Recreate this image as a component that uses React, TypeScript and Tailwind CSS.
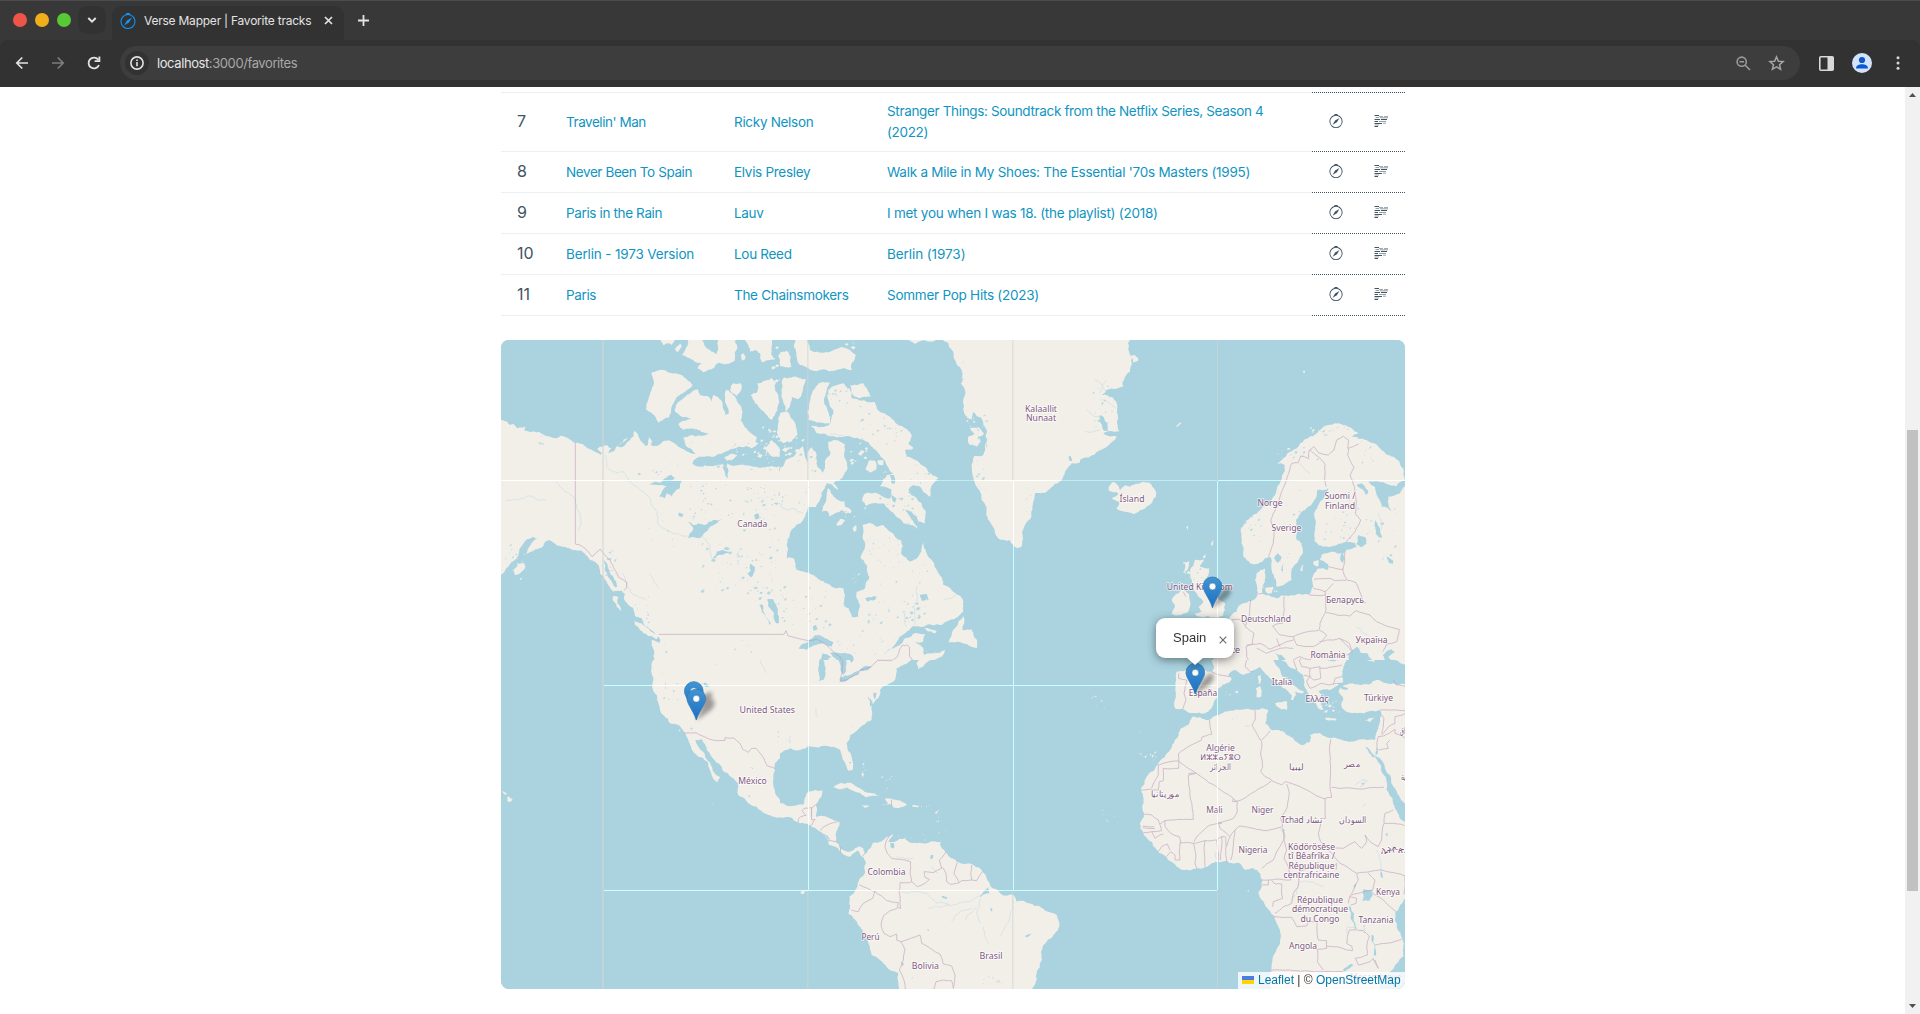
import React from "react";

/* ---------- helpers ---------- */

function makeRandom(seed: number) {
  let s = seed;
  return () => {
    s = (s * 1664525 + 1013904223) % 4294967296;
    return s / 4294967296;
  };
}

/* Breaks straight segments up so that a coarse outline reads as a coastline. */
function rough(points: string, amount = 0.13, close = true, min = 7) {
  const rnd = makeRandom(points.length * 97 + 13);
  const pts = points.trim().split(/\s+/).map((p) => p.split(",").map(Number));
  const out: number[][] = [];
  const split = (a: number[], b: number[], depth: number) => {
    const dx = b[0] - a[0];
    const dy = b[1] - a[1];
    const len = Math.hypot(dx, dy);
    if (len < min || depth > 5 || len > 260) {
      out.push(b);
      return;
    }
    const k = (rnd() - 0.5) * 2 * amount;
    const m = [(a[0] + b[0]) / 2 - dy * k, (a[1] + b[1]) / 2 + dx * k];
    split(a, m, depth + 1);
    split(m, b, depth + 1);
  };
  out.push(pts[0]);
  for (let i = 1; i < pts.length; i++) split(pts[i - 1], pts[i], 0);
  if (close) split(pts[pts.length - 1], pts[0], 0);
  return "M" + out.map((p) => p[0].toFixed(1) + "," + p[1].toFixed(1)).join("L") + (close ? "Z" : "");
}

/* Many small ponds or islets inside a box. */
function specks(x: number, y: number, w: number, h: number, n: number, size: number) {
  const rnd = makeRandom(x * 31 + y * 17 + n);
  let d = "";
  for (let i = 0; i < n; i++) {
    const cx = x + rnd() * w;
    const cy = y + rnd() * h;
    const r = 1 + rnd() * rnd() * size;
    const t = rnd() * 3;
    d += `M${(cx - r).toFixed(1)},${(cy + t).toFixed(1)}L${cx.toFixed(1)},${(cy - r * 0.7).toFixed(1)}L${(cx + r * 1.2).toFixed(1)},${(cy - t).toFixed(1)}L${(cx + r * 0.3).toFixed(1)},${(cy + r * 0.9).toFixed(1)}Z`;
  }
  return d;
}

type Tile = {
  x: number;
  y: number;
  w: number;
  h: number;
  land: string[];
  water: string[];
  rivers?: string[];
  ponds?: number[][];
  islets?: number[][];
  borders: string[];
};

const tiles: Tile[] = [
  {
    x: 0, y: 0, w: 280, h: 320,
    land: [
      "-10,245 8,240 22,246 30,255 42,252 50,264 65,262 75,272 100,274 118,276 138,288 165,294 195,290 212,300 222,308 248,312 262,325 285,335 302,344 306,338 292,328 300,320 320,315 335,325 325,340 345,330 360,312 384,292 372,306 352,322 372,318 388,302 400,290 404,272 414,285 425,305 435,318 443,316 446,290 455,300 452,315 470,318 490,303 510,302 530,315 550,328 565,335 590,342 598,352 580,362 578,372 600,380 630,378 655,374 668,372 680,385 682,370 700,378 735,376 765,380 790,382 815,378 835,380 860,370 860,990 459,990 462,930 455,900 478,910 482,900 470,885 450,868 432,855 425,835 405,828 400,805 385,795 372,778 375,762 365,752 340,755 325,735 314,718 300,700 288,668 262,648 245,632 210,626 180,618 160,608 148,600 135,605 130,618 105,628 80,642 85,625 92,612 112,596 100,590 78,600 62,622 55,645 35,665 25,680 3,705 -10,705",
      "338,768 355,772 352,790 364,815 350,800 342,785",
      "402,842 425,850 450,872 474,888 470,898 445,888 420,870 404,855",
      "40,690 55,672 70,668 76,680 62,698 45,705",
      "455,98 492,90 515,100 545,105 560,118 578,135 555,155 530,172 515,200 508,232 488,240 474,248 455,220 437,208 445,180 455,150 462,125",
      "595,148 600,165 622,168 635,185 640,165 655,172 668,190 675,225 685,222 675,180 678,150 695,160 712,185 725,205 722,240 740,265 770,290 765,305 775,310 755,325 740,318 715,320 690,328 665,342 640,350 600,350 580,335 560,320 550,292 575,285 628,280 590,268 550,270 535,252 580,235 540,228 525,215 535,185 560,165",
      "690,150 700,130 722,130 725,145 710,168 697,160",
      "752,165 770,158 772,130 795,122 815,115 828,125 825,150 835,165 832,210 815,240 795,220 780,205 765,190",
      "545,45 560,20 565,-8 605,-8 630,30 650,42 655,-8 705,-8 712,20 705,60 690,70 655,68 640,85 610,97 592,85 605,70 580,60",
      "475,-8 530,-8 515,15 500,10 490,15",
      "525,30 540,10 545,20 533,38",
      "722,45 732,40 735,58 725,62",
      "728,-8 820,-8 815,20 820,60 785,65 780,40 765,30 750,35 745,15",
      "835,45 855,32 872,40 875,75 860,82 838,70",
      "835,250 840,225 860,215 860,310 850,310 835,290",
      "795,325 815,300 842,330 838,350 810,345",
      "672,352 690,342 712,345 700,358 680,362",
    ],
    water: [
      "447,432 480,428 495,415 515,405 525,415 510,425 545,420 540,445 525,455 515,470 500,460 495,475 478,470 485,455 500,440 470,435",
      "562,545 580,555 595,550 615,555 640,540 665,538 650,550 630,560 612,580 600,595 565,595 575,575 580,565",
      "636,657 650,638 665,630 690,636 665,645",
      "802,778 820,778 830,800 838,848 828,850 822,820 805,800",
      "778,795 790,795 796,830 812,850 808,855 790,820",
      "750,670 765,680 755,712 742,700 752,690",
      "762,525 775,520 778,535 765,538",
      "535,518 550,522 548,530 536,528",
      "328,312 338,318 372,300 340,330",
      "668,378 684,384 682,416 674,395",
      "838,372 850,372 845,398 838,392",
      "310,660 322,672 330,700 352,740 346,742 325,712 314,690",
    ],
    rivers: [
      "316,345 320,380 340,395 370,395 385,420 400,435 430,455 452,480 470,515 472,548 500,570 540,585 562,588",
      "606,590 625,610 635,655",
      "170,425 190,450 225,475 240,520 235,570",
      "18,482 50,478 90,468 110,478 140,480",
      "448,700 465,730 475,742",
      "368,700 380,735 400,765 440,780",
    ],
    ponds: [
      [560, 430, 270, 110, 55, 5], [600, 610, 235, 150, 60, 7], [430, 470, 180, 150, 10, 5],
      [740, 440, 100, 60, 24, 6], [680, 540, 160, 100, 18, 6], [760, 740, 80, 60, 14, 6],
      [415, 345, 120, 60, 9, 6], [480, 880, 340, 80, 9, 4], [300, 620, 50, 120, 20, 6],
      [15, 600, 90, 60, 12, 5], [110, 285, 40, 40, 7, 4], [390, 760, 60, 100, 12, 4],
      [560, 290, 190, 30, 8, 4], [600, 375, 230, 20, 12, 5],
    ],
    islets: [[35, 258, 40, 12, 5, 6], [770, 260, 70, 90, 24, 8], [815, 20, 30, 110, 9, 7], [320, 690, 35, 60, 10, 8], [20, 640, 60, 80, 14, 6], [690, 325, 130, 50, 18, 8]],
    borders: [
      "226,308 226,612 240,615 255,625 276,650 288,638 301,627 312,642 330,660 345,690 356,712 380,727 380,742 372,752",
      "476,883 853,883 858,872 864,888 900,893",
    ],
  },
  {
    x: 280, y: 0, w: 300, h: 320,
    land: [
      "-10,40 8,35 20,32 32,50 35,80 15,82 -10,75",
      "45,-10 78,-10 90,30 120,38 150,35 190,22 210,30 228,45 215,70 215,90 190,85 160,92 130,88 100,92 85,85 60,75 50,50",
      "375,-10 482,-10 450,5 420,4 405,12",
      "5,130 12,112 40,110 78,118 70,145 55,178 35,172 30,200 15,215 10,185 5,160",
      "-10,225 25,215 40,240 52,285 35,305 10,310 -10,300",
      "-10,385 10,378 18,360 40,350 52,330 68,318 80,360 84,375 82,340 95,322 110,345 112,380 128,398 135,385 135,362 150,345 145,305 165,300 195,312 192,345 203,385 185,415 160,430 175,450 155,433 140,430 125,455 120,480 108,502 85,500 75,530 40,565 22,600 20,655 42,655 50,690 75,697 100,705 120,720 155,740 190,745 190,790 215,830 235,830 240,800 230,755 255,745 268,710 262,680 242,655 255,610 250,570 248,555 270,548 290,560 310,555 330,575 345,590 363,600 363,640 390,665 415,650 430,605 440,640 455,660 475,700 490,735 520,755 550,785 550,815 510,840 485,855 440,855 400,858 375,880 350,905 335,925 350,920 375,895 405,880 435,882 430,905 405,908 430,925 432,945 460,940 495,930 485,950 440,965 415,985 -10,990",
      "145,445 158,465 175,480 195,485 195,500 215,512 210,520 185,510 165,520 148,530 140,512 125,515 135,490 140,465",
      "170,550 180,537 195,540 185,555 172,558",
      "218,565 228,555 230,570 222,575",
      "85,240 88,190 100,150 120,128 155,125 140,150 132,190 150,230 152,250 120,248",
      "145,150 190,130 208,145 215,175 245,182 285,185 290,205 320,225 340,240 375,265 395,290 385,310 400,325 375,330 380,350 420,370 445,395 475,415 460,430 450,470 430,455 420,440 400,435 385,450 410,475 435,510 435,550 415,545 395,515 375,510 400,545 412,568 370,550 345,525 325,505 310,490 280,490 258,497 248,485 252,462 285,458 310,470 332,475 335,450 300,440 320,405 340,400 320,375 295,340 275,320 250,300 235,295 210,290 175,292 140,285 110,280 92,258 150,252 160,210 145,180",
      "210,135 250,130 272,170 240,175 215,160",
      "262,375 270,360 285,362 288,390 270,398 258,390",
      "292,362 310,360 310,374 296,374",
      "80,425 100,428 112,436 140,432 122,460 100,456",
      "550,828 553,850 548,870 575,868 582,890 592,905 590,925 575,920 560,912 535,905 505,908 515,885 535,845",
      "433,863 470,875 465,880 440,872",
      "480,-10 505,10 520,35 525,60 545,90 543,130 555,150 550,190 555,225 575,240 580,215 605,235 620,270 622,300 615,330 610,345 583,348 577,400 590,440 605,480 625,540 645,580 665,600 690,600 712,625 725,620 728,590 738,550 757,500 765,460 800,455 845,420 855,395 875,370 910,365 910,-10",
      "563,290 585,280 602,303 590,320 570,315",
      "570,265 595,262 612,280 600,290",
    ],
    water: [
      "330,405 342,405 345,430 335,430",
      "332,465 350,475 345,488 338,482",
      "55,925 85,905 105,885 135,895 160,908 155,920 135,912 115,912 95,920 80,930",
      "118,990 116,965 128,940 155,950 140,962 132,990",
      "150,938 185,940 215,945 222,960 205,975 185,965 170,960",
      "98,860 108,855 112,868 100,872",
      "255,775 290,770 285,780 260,784",
      "420,765 440,762 445,775 425,782",
      "845,470 790,465 770,480 800,458",
      "865,350 872,348 876,362 868,362",
      "190,795 205,792 215,800 200,803",
      "360,600 364,590 370,610",
    ],
    rivers: ["375,820 378,860", "-5,498 40,505 70,520", "492,780 510,775 528,765", "335,925 315,942", "148,300 152,282 190,288 222,296", "410,740 402,800 405,855"],
    ponds: [
      [0, 740, 150, 130, 35, 5], [255, 760, 200, 90, 40, 8], [255, 590, 100, 60, 20, 4], [0, 430, 90, 90, 14, 4],
      [290, 660, 170, 90, 15, 4], [145, 140, 60, 60, 15, 6], [240, 190, 140, 130, 28, 5], [300, 455, 100, 60, 14, 6],
      [520, 60, 30, 150, 16, 5], [590, 360, 30, 160, 20, 5], [580, 220, 40, 120, 16, 5], [730, 440, 70, 120, 12, 5],
      [170, 870, 200, 80, 18, 4], [350, 520, 60, 40, 10, 5], [50, 320, 60, 90, 12, 5], [390, 370, 60, 60, 12, 4],
    ],
    islets: [[10, 290, 60, 60, 22, 9], [210, 300, 60, 70, 16, 9], [190, 500, 80, 30, 7, 7], [215, 700, 25, 30, 7, 6], [0, 0, 30, 60, 6, 6], [195, 4, 40, 20, 5, 7], [430, 930, 40, 20, 5, 5], [560, 215, 50, 70, 14, 8], [300, 385, 50, 40, 9, 7]],
    borders: [
      "-5,883 12,883 18,872 25,888 45,893 65,898 95,902 110,897 140,915 160,935 180,950 188,968 188,1000",
      "265,990 292,961 338,961 352,950 358,930 368,915 375,918 380,914 388,920 388,948 398,960",
    ],
  },
  {
    x: 580, y: 0, w: 330, h: 320,
    land: [
      "-10,-10 148,-10 145,30 155,75 150,95 135,110 130,140 112,145 80,150 65,165 100,175 112,200 115,270 118,275 70,280 110,290 80,320 40,345 -10,368",
      "152,48 165,45 175,62 160,68",
      "288,260 300,247 303,250 291,261",
      "669,92 675,92 675,98 670,98",
      "100,425 112,435 120,450 135,435 150,440 175,432 190,425 210,430 225,450 228,470 215,490 190,508 160,522 135,515 110,506 118,485 95,475 115,460 85,450 90,435",
      "590,370 610,355 640,330 660,310 690,290 720,270 745,255 765,250 790,255 815,265 835,280 815,290 860,300 900,325 940,350 970,385 975,420 950,438 920,432 880,425 865,425 885,440 890,465 905,500 935,512 925,470 960,460 972,440 1000,440 1000,1000 395,1000 400,960 395,880 370,862 400,858 430,850 450,830 470,815 480,795 500,788 530,770 525,720 530,700 555,685 556,710 548,740 548,762 565,765 590,775 605,765 625,768 660,762 690,762 700,740 702,700 715,685 745,690 745,672 720,660 725,645 760,635 790,640 800,630 832,622 825,608 800,605 770,615 730,620 705,605 705,560 702,520 718,490 735,465 745,445 712,450 700,485 665,515 648,540 650,600 665,610 668,640 640,680 635,720 610,735 590,740 588,720 575,690 570,650 555,655 530,672 510,670 490,650 485,610 482,570 495,545 520,525 550,500 580,470 600,430 610,400 615,375",
      "555,745 580,740 575,760 560,758",
      "660,690 672,672 667,695",
      "700,665 715,660 716,678 702,676",
      "345,660 372,658 360,680 388,685 385,705 370,725 395,740 410,770 435,790 435,810 428,828 400,832 370,832 350,828 345,820 365,815 355,800 370,785 355,770 340,745 335,720 330,690",
      "285,765 305,750 325,760 332,790 325,815 295,825 275,822 285,800 275,780",
      "318,560 324,558 322,570",
      "392,612 402,600 398,618",
      "315,668 328,664 322,690 314,695",
    ],
    water: [
      "835,585 855,590 860,610 845,622 828,612",
      "885,540 900,570 905,595 890,585",
      "582,655 592,640 605,650 595,668",
      "603,690 612,670 608,700",
      "782,640 790,640 790,670 784,665",
      "800,1000 805,945 830,920 842,938 862,940 880,965 915,962 908,945 935,928 945,935 925,950 950,978 980,985 1000,1000",
      "585,940 605,945 622,965 645,1000 600,1000",
      "60,225 70,230 85,275 70,270",
      "370,310 352,320 372,325",
      "920,650 940,662 938,672 925,665",
      "830,435 845,430 865,455 858,465",
    ],
    rivers: [
      "45,120 75,150 110,170", "20,210 60,230 72,265", "15,275 60,270", "60,180 90,190 108,205", "830,860 845,875 865,885", "895,520 905,560 895,590", "660,370 690,400", "80,120 60,160",
    ],
    ponds: [
      [780, 440, 60, 130, 22, 5], [730, 520, 80, 80, 16, 4], [600, 400, 60, 140, 10, 4], [840, 300, 100, 90, 16, 4], [600, 620, 50, 100, 9, 4],
      [850, 480, 100, 180, 16, 6], [40, 120, 70, 160, 20, 5], [600, 310, 120, 50, 18, 5], [485, 520, 60, 90, 14, 4], [720, 255, 90, 30, 14, 5], [335, 665, 40, 60, 8, 4],
    ],
    islets: [[590, 320, 80, 50, 16, 7], [690, 260, 40, 20, 6, 8], [310, 665, 20, 50, 8, 7], [366, 640, 12, 12, 3, 6], [548, 740, 50, 20, 5, 6], [700, 600, 40, 15, 6, 5]],
    borders: [
      "565,650 580,610 582,570 572,540 590,500 605,455 622,410 635,370 655,368 662,348 685,355 688,330 702,320 715,338 745,345 762,330 770,300 790,288 806,300 803,325 836,312",
      "806,325 803,345 812,365 822,382 810,408 823,440 826,520 842,540 825,575 798,605",
      "690,330 715,350 735,372 734,420 738,440",
      "795,635 788,690 800,720 828,728 848,782 858,790",
      "745,680 790,688", "702,718 750,715 765,722 798,722", "700,745 735,755 760,730", "735,755 738,810 720,850 718,868",
      "688,765 735,765", "738,818 810,828 828,812 870,825 890,845 958,868 950,905 920,912 908,935", "612,770 608,850 590,852 578,858 600,885 640,890 670,878 718,870 740,885 718,910 700,920 650,915 640,890",
      "512,780 508,830 495,860 522,880 518,912 498,920 500,950 520,1000", "455,840 480,838 495,855", "500,915 540,910 570,928 620,905 640,900", "530,925 560,940 600,925 640,925",
      "718,905 760,900 778,895 800,915 815,935 800,945", "640,960 660,950 690,960 700,945 760,955 795,945", "628,960 640,990", "660,955 680,985", "310,755 318,770",
      "590,895 600,920", "535,762 548,760", "778,895 808,910 818,935",
    ],
  },
  {
    x: 0, y: 320, w: 280, h: 329,
    land: [
      "460,-10 455,40 458,85 475,130 490,165 510,190 535,195 552,215 565,240 580,275 595,290 610,295 625,310 635,345 652,368 660,352 640,335 632,315 615,285 595,260 585,240 605,238 620,270 635,290 655,310 672,335 700,355 715,380 715,405 745,430 770,440 800,462 840,473 860,470 860,430 845,425 825,395 820,350 825,310 845,285 860,270 860,-10",
      "22,410 38,418 28,427 22,422",
      "6,394 20,400 18,405 10,400",
    ],
    water: ["610,70 618,68 625,82 616,80", "518,92 524,90 523,98", "750,323 760,324 758,327", "742,407 752,408 748,411"],
    rivers: ["780,-5 790,20 800,38"],
    ponds: [[480, 30, 60, 90, 8, 4], [600, 60, 30, 30, 6, 4], [640, 10, 8, 8, 1, 4], [830, 190, 10, 60, 4, 3], [570, 200, 10, 10, 2, 4]],
    islets: [[518, 200, 25, 15, 3, 3], [538, 272, 4, 4, 1, 3], [636, 428, 3, 3, 1, 2]],
    borders: ["552,220 588,218 638,240 675,241 675,233 702,234 718,248 728,268 745,277 755,265 768,265 785,285 802,318 826,326"],
  },
  {
    x: 280, y: 320, w: 300, h: 329,
    land: [
      "-10,-10 400,-10 350,25 345,60 320,75 300,90 295,115 275,140 275,180 250,195 210,225 200,250 215,290 218,330 205,332 190,300 180,270 165,262 140,258 110,262 85,258 60,270 30,265 -10,282",
      "410,10 425,-12 500,-22 430,20 415,28",
      "-10,430 25,438 70,435 80,400 105,390 128,392 120,415 108,435 110,472 150,475 178,485 172,510 168,545 180,565 205,575 235,560 250,565 258,585 250,592 235,572 220,580 208,590 180,575 145,552 145,540 120,515 95,500 60,490 30,472 -10,470",
      "250,590 262,575 280,548 310,540 335,522 340,525 325,545 345,545 375,535 390,548 430,550 470,545 485,565 500,580 530,605 575,612 605,630 620,655 632,680 660,700 700,705 710,725 750,730 780,740 805,755 830,765 838,790 825,820 800,845 783,875 780,920 770,960 755,1000 355,1000 355,940 320,920 275,885 265,850 240,800 220,775 205,760 210,740 208,710 225,690 235,665 255,640 258,610",
      "160,382 180,370 210,368 240,385 270,398 298,408 260,412 235,398 200,382 170,385",
      "315,415 350,420 380,435 340,442 335,435 300,436 325,430",
      "397,436 418,437 415,441 397,440",
      "245,436 270,440 255,444",
      "474,546 482,546 480,553 473,552",
      "245,335 252,345 248,352",
      "178,384 186,384 184,390",
      "62,695 72,692 72,702 64,702",
      "622,690 645,688 650,705 630,712",
    ],
    water: [
      "330,548 342,550 342,565 332,562",
      "178,65 182,52 210,45 238,32 232,45 200,62",
      "238,30 250,20 275,20 265,30 245,34",
      "112,-10 130,-10 138,25 130,60 118,64 115,30",
      "172,-10 195,-10 200,10 190,45 182,20",
      "205,-8 222,-2 215,8",
      "262,108 272,118 280,135 270,140 270,122",
      "280,98 290,100 282,118",
      "206,307 213,306 212,312",
      "452,585 460,585 456,598 450,595",
      "485,708 502,712 500,717 488,714",
      "630,742 638,750 634,756",
      "735,828 755,820 750,826 738,832",
      "440,808 448,810 445,814",
      "360,905 372,912 368,920",
      "130,520 152,538 146,538",
      "625,680 610,695 600,712 628,700",
    ],
    rivers: [
      "365,697 400,695 440,700 450,712 470,730 510,738 560,725 590,712 625,690", "445,745 490,740 510,732", "515,785 540,755 575,745", "555,780 570,760 590,740",
      "600,715 590,760 600,790", "610,800 625,850", "-5,695 0,690", "350,590 400,595", "108,145 112,170", "700,720 690,770 660,830", "455,620 475,640",
    ],
    ponds: [[10, 230, 25, 20, 5, 3], [215, 195, 10, 10, 1, 4], [610, 945, 60, 30, 10, 4], [395, 948, 6, 6, 1, 5], [635, 950, 30, 20, 5, 4]],
    islets: [[465, 440, 15, 80, 10, 4], [240, 310, 30, 50, 6, 5], [280, 350, 60, 50, 8, 4], [350, 522, 90, 20, 8, 3], [62, 690, 28, 18, 5, 4], [420, 436, 30, 6, 4, 3], [495, 508, 4, 4, 1, 3]],
    borders: [
      "188,-5 186,40 180,60 200,60 235,42 240,30 270,22 292,2 338,2",
      "55,488 55,478 62,470 78,466 66,452 72,445 95,443 95,470", "110,432 95,445 95,480 105,478 95,495 90,498", "122,512 128,502 148,492 175,485", "145,540 170,545", "182,562 182,578", "256,578 248,588", "335,418 335,438",
      "335,522 320,540 315,560 322,580 335,595 360,598 392,606 390,640 395,665 388,668 360,668 360,685 357,690 362,745 352,742 355,728 320,722 285,695 238,674",
      "285,695 278,715 250,730 235,755 214,750", "352,745 330,752 312,765 303,795 312,820 330,830 350,822 350,840 362,845 420,825 425,850 455,868 480,882 490,912 515,918 525,945 520,985",
      "362,845 375,870 370,900 358,930 370,955 376,990", "460,990 468,965 490,960 515,962 520,985",
      "395,665 412,680 435,670 448,658 435,652 432,635 460,638 485,625 478,600 495,580 498,575", "488,622 498,640 500,665 512,673 538,668 522,640 532,608", "538,668 545,662 575,660 572,640 575,615", "575,660 590,662 600,645 608,635",
    ],
  },
  {
    x: 580, y: 320, w: 330, h: 329,
    land: [
      "338,170 385,180 400,170 430,158 480,150 520,150 545,145 565,150 560,175 555,190 575,210 610,215 640,235 670,255 690,245 690,225 720,220 740,232 780,238 820,245 860,240 885,240 895,200 905,165 900,150 870,152 835,160 800,155 785,140 790,115 775,95 785,80 840,75 890,60 940,70 1000,80 1000,705 975,715 960,735 945,760 950,800 968,840 970,890 930,935 900,960 895,1000 575,1000 575,930 600,850 590,790 580,765 555,735 535,700 545,680 540,640 520,625 495,630 480,610 440,603 385,618 350,625 312,630 290,620 265,600 240,580 215,545 190,520 180,490 192,460 190,420 182,390 200,350 235,310 270,270 285,240 300,210 325,195",
      "288,55 290,35 325,28 345,32 395,35 402,20 395,-10 580,-10 585,10 598,25 608,50 625,60 640,75 670,92 670,100 645,95 648,105 640,120 632,120 635,105 620,90 600,75 570,55 555,40 540,20 515,35 490,45 465,30 445,45 455,58 445,68 415,85 410,115 400,135 385,155 350,160 330,160 315,150 285,145 288,100",
      "598,-10 620,10 650,30 670,45 672,75 685,100 700,120 715,145 730,150 720,120 735,125 725,105 715,92 750,90 765,80 790,65 785,50 790,20 800,0 805,-10",
      "880,-10 885,5 860,0",
      "930,-10 960,10 1000,20 1000,-10",
      "585,130 622,125 620,150 590,138",
      "528,85 542,78 545,108 530,112",
      "533,50 542,45 540,72 535,70",
      "735,173 770,178 765,182 738,179",
      "855,182 882,172 870,186",
      "465,95 474,92 472,99 466,98",
      "447,104 452,102 451,107",
      "193,290 200,286 198,295",
      "214,288 222,284 219,293",
      "222,280 230,273 228,280",
    ],
    water: [
      "884,288 905,335 920,390 945,445 995,505 995,455 975,430 940,380 915,325 900,295",
      "856,262 862,262 884,292 878,292",
      "886,292 892,262 894,280",
      "850,688 875,690 878,705 868,722 846,722",
      "806,738 812,740 820,780 830,808 824,806 812,775",
      "874,825 882,828 886,865 888,888 880,885 880,850",
      "788,930 815,912 820,916 795,935",
      "780,80 805,83 800,90 785,88",
      "916,522 924,520 922,530",
      "900,640 905,635 908,655 903,650",
      "820,680 828,670 825,695",
      "524,645 535,640 532,652",
      "938,560 945,558 942,568",
    ],
    rivers: ["632,725 650,700 655,665", "660,665 690,665 730,680", "800,820 803,800 830,802", "825,375 850,360 862,362 845,380", "495,198 510,198", "600,505 615,520", "405,575 410,595", "858,430 850,440", "890,570 900,600 905,640"],
    ponds: [[455, 160, 20, 20, 3, 3], [400, 570, 15, 35, 4, 5], [605, 510, 10, 10, 2, 4], [835, 790, 20, 30, 4, 4], [825, 355, 35, 30, 4, 5]],
    islets: [[725, 100, 55, 60, 18, 6], [30, 105, 45, 40, 6, 3], [68, 450, 35, 35, 7, 4], [170, 272, 60, 30, 6, 3], [425, 95, 50, 12, 4, 4], [178, 215, 6, 3, 1, 5], [502, 690, 3, 3, 1, 4]],
    borders: [
      "388,180 390,200 396,222 365,232 365,240 310,270 296,280 296,325 250,325 250,362 238,365 235,390 182,390", "296,303 325,325 410,380 460,415 458,425 472,424 575,362 605,375 615,365 625,367 735,417",
      "235,345 215,385", "325,340 348,340 325,345 340,478 300,478 255,482 240,492", "460,418 472,424 472,455 460,475 415,488 425,490 390,495 355,525 342,545",
      "235,345 235,315 270,305 296,303",
      "525,150 525,180 516,195 530,220 545,245 542,285 548,320 542,335 555,350 575,360", "570,212 555,230 545,240",
      "752,238 755,412 735,415 737,475 725,475 715,520 722,545 735,560", "755,382 912,382",
      "620,372 628,400 622,440 602,475 608,500 560,512 520,505 480,498 465,510 452,600",
      "415,488 420,505 450,530 465,510", "410,540 375,542 375,620", "410,540 412,555 415,605", "410,540 425,530 435,530", "425,530 425,560 422,600", "438,530 440,605", "450,530 440,560",
      "300,548 340,550 375,542", "340,550 348,585 345,610 350,625", "300,548 298,575 300,600 285,600 285,585 272,575 260,590", "255,482 255,500 272,520 298,530 302,548", "190,463 215,465 235,480 245,512 215,515 190,518", "188,503 225,505", "188,498 222,500", "215,515 225,535 240,525 250,522", "235,575 245,560 262,552 270,570",
      "608,505 615,530 600,560 590,575 580,600 560,612 545,625", "608,505 612,540 620,570 612,595 625,620 632,660 545,660", "545,675 565,675 565,660", "575,662 585,672 605,672 608,715 580,725 578,740", "655,645 655,680 640,700 635,730 610,740 585,760",
      "632,655 650,640 680,625 720,620 760,620 770,610 768,630", "735,560 780,610 830,640 870,635 905,630 950,640 975,648", "735,560 790,565 825,545 845,565 860,545 855,525 870,545 895,560 905,540 912,490 940,490 985,500", "912,490 915,460 940,450", "830,640 835,660 820,690 810,710 805,730", "865,640 885,660 878,690 835,700 815,705", "878,700 915,725 948,755", "975,645 972,700 985,715",
      "808,710 830,715 828,730 812,735", "582,770 635,772 650,800 680,798 685,785 712,785 715,840 740,842 740,865 712,868 712,905 730,930", "740,858 770,860 800,870 818,872 815,858 800,850 808,810 850,812 868,828", "575,930 640,932 730,935 790,935", "868,828 860,860 862,885 825,895 835,915 870,905 880,895 895,925 885,900", "885,855 920,850 965,838",
      "296,40 296,55 320,60 312,100 318,120 308,148", "395,35 420,45 450,50", "500,-5 495,20 510,35 520,35", "672,45 690,50 680,65 690,85 700,82 722,70 745,75 760,72 780,70", "640,-5 650,30", "655,-5 665,20 690,25 690,50", "690,25 720,20 722,55 700,60 690,50", "760,72 765,55 785,50", "720,25 760,20 785,15",
      "900,150 935,150 975,152 990,170", "905,225 925,200 945,190 945,170 990,155", "890,270 895,230 910,228 945,208 945,220 985,240", "895,270 925,265 920,250 930,240", "905,165 912,175 905,220", "940,60 950,75 985,80",
    ],
  },
];

/* name, centre x, baseline, width — in map pixels */
const labels: [string, number, number, number][] = [
  ["Canada", 251.3, 187, 30],
  ["Kalaallit", 540, 71.5, 32],
  ["Nunaat", 540, 81, 30],
  ["Ísland", 631, 162, 25],
  ["Norge", 769, 166, 25],
  ["Sverige", 785.5, 191, 30],
  ["Suomi /", 839, 159, 31],
  ["Finland", 839, 168.5, 30],
  ["United Kingdom", 698.7, 250, 66],
  ["Deutschland", 765, 282, 50],
  ["Беларусь", 844, 263, 38],
  ["Україна", 870.5, 302.5, 32],
  ["România", 827, 318, 35],
  ["France", 725, 312.5, 28],
  ["United States", 266.3, 373, 55.5],
  ["México", 251.5, 443.5, 28.5],
  ["Colombia", 385.5, 535, 38],
  ["Perú", 369.5, 600, 18],
  ["Bolivia", 424.3, 628.5, 27],
  ["Brasil", 490, 619, 23],
  ["España", 702, 355.5, 28.5],
  ["Italia", 781, 344.5, 20.5],
  ["Ελλάς", 816, 361.5, 23],
  ["Türkiye", 877.5, 360.5, 29],
  ["Algérie", 719.5, 411, 28.5],
  ["الجزائر", 719.5, 429.5, 21],
  ["ليبيا", 795, 429.5, 15],
  ["مصر", 851, 427, 16],
  ["موريتانيا", 664, 457, 29],
  ["Mali", 713.5, 472.5, 16.5],
  ["Niger", 761.5, 472.5, 22],
  ["Tchad تشاد", 801, 483, 42],
  ["السودان", 852, 483, 28],
  ["Nigeria", 752, 513, 29],
  ["Ködörösêse", 810.5, 509.5, 47],
  ["tî Bêafrîka /", 810.5, 519, 47],
  ["République", 810.5, 528.5, 46],
  ["centrafricaine", 810.5, 538, 56],
  ["ኢትዮጵያ", 894, 512.5, 28],
  ["Kenya", 887, 554.5, 24],
  ["République", 819, 562.5, 46],
  ["démocratique", 819, 572, 56],
  ["du Congo", 819, 581.5, 39],
  ["Tanzania", 875, 582.5, 35],
  ["Angola", 802, 608.5, 28],
  ["Moçambique", 875, 640, 52],
  ["العراق", 906, 394, 14],
  ["السعودية", 912, 440, 24],
];

function TilePiece({ tile }: { tile: Tile }) {
  return (
    <svg x={tile.x - 1} y={tile.y} width={tile.w} height={tile.h} viewBox={`0 0 ${tile.w * 3} ${tile.h * 3}`}>
      <g fill="#f2efe9">
        {tile.land.map((p, i) => <path key={i} d={rough(p)} />)}
        {tile.islets?.map((s, i) => <path key={i} d={specks(s[0], s[1], s[2], s[3], s[4], s[5])} />)}
      </g>
      <g fill="#aad3df">
        {tile.water.map((p, i) => <path key={i} d={rough(p)} />)}
        {tile.ponds?.map((s, i) => <path key={i} opacity={0.85} d={specks(s[0], s[1], s[2], s[3], s[4], s[5])} />)}
      </g>
      <g fill="none" stroke="#aad3df" strokeWidth={2.2} opacity={0.5}>
        {tile.rivers?.map((p, i) => <path key={i} d={rough(p, 0.13, false)} />)}
      </g>
      <g fill="none" stroke="#b795b5" strokeWidth={2.6} opacity={0.62} strokeLinejoin="round">
        {tile.borders.map((p, i) => <path key={i} d={rough(p, 0.05, false, 16)} />)}
      </g>
    </svg>
  );
}

function Marker({ x, y }: { x: number; y: number }) {
  return (
    <g transform={`translate(${x} ${y})`}>
      <path d="M0 0 C3 -10 8 -17 15 -21 C20 -22 19 -14 14 -10 Z" fill="#000" opacity="0.36" filter="url(#soft)" />
      <path d="M0 -0.5 C-1.6 -6 -4.6 -10.5 -7 -15 C-8.7 -18.2 -9.3 -20 -9.3 -22 A9.3 9.3 0 0 1 9.3 -22 C9.3 -20 8.7 -18.2 7 -15 C4.6 -10.5 1.6 -6 0 -0.5Z" fill="url(#pin)" stroke="#2e7ab4" strokeWidth="0.8" />
      <circle cy="-21.8" r="3.4" fill="#fff" stroke="#2e6c97" strokeWidth="0.5" />
    </g>
  );
}

function WorldMap() {
  return (
    <div className="relative mt-[24px] h-[649px] w-[904px] overflow-hidden rounded-[8px] bg-[#aad3df]">
      <svg width="904" height="649" viewBox="0 0 904 649" className="isolate block">
        <defs>
          <linearGradient id="pin" x1="0" y1="0" x2="0" y2="1">
            <stop offset="0" stopColor="#4294d3" />
            <stop offset="1" stopColor="#1b70c2" />
          </linearGradient>
          <filter id="soft" x="-50%" y="-50%" width="200%" height="200%">
            <feGaussianBlur stdDeviation="2" />
          </filter>
        </defs>
        <rect width="904" height="649" fill="#aad3df" />
        {tiles.map((t, i) => <TilePiece key={i} tile={t} />)}
        <g fontFamily="'Noto Sans', sans-serif" fontSize="8.6" textAnchor="middle" fill="#7f587f" stroke="#fff" strokeOpacity="0.75" strokeWidth="1.7" strokeLinejoin="round" paintOrder="stroke">
          {labels.map(([t, x, y, w], i) => (
            <text key={i} x={x} y={y} textLength={w} lengthAdjust="spacingAndGlyphs">{t}</text>
          ))}
          <text x="719.5" y="420" fontSize="7.8" fontFamily="'DejaVu Sans', sans-serif">ⵍⵣⵣⴰⵢⴻⵔ</text>
        </g>
        <g fill="#d3d5d6" opacity="0.55">
          <rect x="101" width="2" height="649" />
          <rect x="306" width="1.5" height="140" />
          <rect x="306" y="551" width="1.5" height="98" />
          <rect x="511" width="1.5" height="140" />
          <rect x="511" y="551" width="1.5" height="98" />
          <rect x="716" width="1" height="140" />
          <rect x="716" y="551" width="1" height="98" />
        </g>
        <g fill="#222c20" className="mix-blend-plus-lighter">
          <rect y="140" width="437" height="1" />
          <rect x="437" y="140" width="279" height="1" opacity="0.6" />
          <rect x="717" y="140" width="188" height="1" />
          <rect x="307" y="141" width="1" height="409" />
          <rect x="512" y="141" width="1" height="409" />
          <rect x="716" y="141" width="1" height="409" />
          <rect x="103" y="345" width="613" height="1" />
          <rect x="103" y="550" width="613" height="1" />
        </g>
        <Marker x={711.5} y={268.3} />
        <Marker x={192.8} y={373} />
        <Marker x={195.3} y={380.5} />
        <Marker x={694.3} y={354.5} />
      </svg>
      <div className="absolute left-[655px] top-[278px] h-[40px] w-[78px] drop-shadow-[0_2px_5px_rgba(0,0,0,0.45)]">
        <div className="flex h-[40px] items-center rounded-[9px] bg-white pl-[17px] text-[13px] text-[#333] [font-family:'Liberation_Sans',sans-serif]">
          <span className="w-[46px]">Spain</span>
          <svg width="8" height="8" viewBox="0 0 7 7" className="mt-[4px]"><path d="M0.6 0.6 6.4 6.4M6.4 0.6 0.6 6.4" stroke="#6b6b6b" strokeWidth="1" /></svg>
        </div>
        <svg width="18" height="9" viewBox="0 0 18 9" className="absolute left-[30px] top-[39px]"><path d="M0 0H18L9 8Z" fill="#fff" /></svg>
      </div>
      <div className="absolute bottom-0 right-0 flex h-[17px] w-[167px] items-center bg-white/80 pb-px pl-[4px] text-[12px] leading-none text-[#333] [font-family:'Liberation_Sans',sans-serif]">
        <svg width="12" height="8" viewBox="0 0 12 8" className="mr-[4px] shrink-0"><path fill="#4C7BE1" d="M0 0h12v4H0z" /><path fill="#FFD500" d="M0 4h12v4H0z" /></svg>
        <span className="whitespace-pre"><span className="text-[#0078a8]">Leaflet</span> | © <span className="text-[#0078a8]">OpenStreetMap</span></span>
      </div>
    </div>
  );
}

function Compass({ size, className }: { size: number; className?: string }) {
  return (
    <svg width={size} height={size} viewBox="0 0 16 16" fill="currentColor" className={className}>
      <path d="M8 16.016a7.5 7.5 0 0 0 1.962-14.74A1 1 0 0 0 9 0H7a1 1 0 0 0-.962 1.276A7.5 7.5 0 0 0 8 16.016zm6.5-7.5a6.5 6.5 0 1 1-13 0 6.5 6.5 0 0 1 13 0z" />
      <path d="m6.94 7.44 4.95-2.83-2.83 4.95-4.949 2.83 2.828-4.95z" />
    </svg>
  );
}

function Lyrics() {
  return (
    <svg width="15" height="14" viewBox="0 0 15 14" fill="none" stroke="#415462">
      <path d="M0.5 1.5H5M0.5 5.5H6M7 5.5H13M0.5 7.5H4M0.5 9.5H8M0.5 12.5H4" strokeWidth="1" />
      <path d="M5 2.6H9M10 2.6H14M1.5 3.5H5M6 3.8H14M5 7.5H12M0.5 11H5M9 9.2H12" strokeWidth="1" opacity="0.55" />
    </svg>
  );
}

const rows = [
  { n: "7", title: "Travelin' Man", artist: "Ricky Nelson", album: "Stranger Things: Soundtrack from the Netflix Series, Season 4 (2022)", h: "h-[59px]", t: "tracking-[-0.45px]", a: "tracking-[-0.34px]" },
  { n: "8", title: "Never Been To Spain", artist: "Elvis Presley", album: "Walk a Mile in My Shoes: The Essential '70s Masters (1995)", h: "h-[41px]", t: "tracking-[-0.4px]", a: "tracking-[-0.25px]" },
  { n: "9", title: "Paris in the Rain", artist: "Lauv", album: "I met you when I was 18. (the playlist) (2018)", h: "h-[41px]", t: "tracking-[-0.36px]", a: "tracking-[-0.25px]" },
  { n: "10", title: "Berlin - 1973 Version", artist: "Lou Reed", album: "Berlin (1973)", h: "h-[41px]", t: "tracking-[-0.16px]", a: "tracking-[-0.08px]" },
  { n: "11", title: "Paris", artist: "The Chainsmokers", album: "Sommer Pop Hits (2023)", h: "h-[41px]", t: "tracking-[-0.36px]", a: "tracking-[-0.25px]" },
];

function Tracks() {
  return (
    <div className="mt-[5px] border-t border-[#edf0f3] text-[13.5px] leading-[21px] text-[#1095c1]">
      {rows.map((r, i) => (
        <div key={r.n} className={"flex items-stretch " + r.h}>
          <div className="flex flex-1 items-center border-b border-[#edf0f3]">
            <span className="w-[65px] pb-px pl-[16px] text-[16px] text-[#415462]">{r.n}</span>
            <span className={"w-[168px] " + r.t}>{r.title}</span>
            <span className="w-[153px] tracking-[-0.3px]">{r.artist}</span>
            <span className={"w-[400px] " + r.a}>{r.album}</span>
          </div>
          <div className={"flex w-[93px] items-center border-b border-dotted border-[#415462] text-[#415462] " + (i === 0 ? "-mt-px border-t" : "")}>
            <span className="flex w-[47px] justify-center pb-[2px]"><Compass size={14} /></span>
            <span className="flex w-[46px] justify-center pb-[3px] pr-[2px]"><Lyrics /></span>
          </div>
        </div>
      ))}
    </div>
  );
}

function Chrome() {
  return (
    <header className="h-[87px] bg-[#383838] text-[#e3e3e3]">
      <div className="flex h-[40px] items-start border-t border-[#4c4c4c]">
        <div className="flex h-[38px] items-center gap-[8px] pl-[13px]">
          <i className="size-[14px] rounded-full bg-[#ed5549]" />
          <i className="size-[14px] rounded-full bg-[#f1ae1b]" />
          <i className="size-[14px] rounded-full bg-[#58c935]" />
        </div>
        <div className="ml-[7px] mt-[5px] flex h-[28px] w-[28px] items-center justify-center rounded-[9px] bg-[#323232]">
          <svg width="10" height="8" viewBox="0 0 10 8" fill="none" stroke="currentColor" strokeWidth="2"><path d="M1.3 2 5 5.6 8.7 2" /></svg>
        </div>
        <div className="relative ml-[6px] mt-[5px] flex h-[34px] w-[232px] items-center rounded-t-[10px] bg-[#323232] pb-[5px] pl-[8px]">
          <Compass size={16} className="text-[#1096ff]" />
          <span className="ml-[8px] w-[167px] whitespace-nowrap text-[12px] tracking-[-0.23px]">Verse Mapper | Favorite tracks</span>
          <svg width="9" height="9" viewBox="0 0 9 9" className="ml-[13px]" stroke="currentColor" strokeWidth="1.7"><path d="M1 1 8 8M8 1 1 8" /></svg>
        </div>
        <svg width="11" height="11" viewBox="0 0 11 11" className="ml-[14px] mt-[13.5px]" stroke="currentColor" strokeWidth="1.8"><path d="M5.5 0V11M0 5.5H11" /></svg>
      </div>
      <div className="flex h-[47px] items-center rounded-t-[8px] bg-[#323232] pb-[1px]">
        <svg width="14" height="14" viewBox="0 0 14 14" className="ml-[15px]" fill="none" stroke="currentColor" strokeWidth="1.7"><path d="M13 7H2M7.3 1.5 1.8 7l5.5 5.5" /></svg>
        <svg width="14" height="14" viewBox="0 0 14 14" className="ml-[22px] text-[#7d7d7d]" fill="none" stroke="currentColor" strokeWidth="1.7"><path d="M1 7H12M6.7 1.5 12.2 7l-5.5 5.5" /></svg>
        <svg width="16" height="16" viewBox="0 0 16 16" className="ml-[21px]" fill="none" stroke="currentColor" strokeWidth="1.8"><path d="M13 10A5.4 5.4 0 1 1 12.2 4.6M13.4 1.5V6.2H8.6" /></svg>
        <div className="ml-[18px] flex h-[34px] w-[1680px] items-center rounded-full bg-[#3d3d3d]">
          <div className="ml-[5px] flex size-[24px] items-center justify-center rounded-full bg-[#323232]">
            <svg width="14" height="14" viewBox="0 0 14 14" fill="none" stroke="currentColor" strokeWidth="1.6"><circle cx="7" cy="7" r="6.1" /><path d="M7 6V10.3M7 3.4V5" /></svg>
          </div>
          <span className="ml-[8px] pt-[2px] text-[13px] tracking-[-0.41px] text-[#a8a8a8]"><span className="text-[#e6e6e6]">localhost</span>:3000/favorites</span>
          <span className="flex-1" />
          <svg width="15" height="15" viewBox="0 0 15 15" className="mr-[17px] text-[#9a9a9a]" fill="none" stroke="currentColor" strokeWidth="1.6"><circle cx="5.7" cy="5.7" r="4.6" /><path d="M9 9l5 5M3.5 5.7H8" /></svg>
          <svg width="17" height="16" viewBox="0 0 17 16" className="mr-[15px] text-[#a5a5a5]" fill="none" stroke="currentColor" strokeWidth="1.5"><path d="m8.5 1.9 1.9 4.3 4.7.4-3.6 3.1 1.1 4.6-4.1-2.4-4.1 2.4 1.1-4.6L1.9 6.6l4.7-.4z" /></svg>
        </div>
        <svg width="15" height="15" viewBox="0 0 15 15" className="ml-[19px]"><rect x="0.8" y="0.8" width="13.4" height="13.4" rx="1" fill="none" stroke="#d8d8d8" strokeWidth="1.6" /><path d="M8.5 1h5.5v13H8.5z" fill="#d8d8d8" /></svg>
        <svg width="20" height="20" viewBox="0 0 20 20" className="ml-[18px]"><circle cx="10" cy="10" r="10" fill="#d3e3fd" /><circle cx="10" cy="7" r="3.1" fill="#0b57d0" /><path d="M4 15.5c0-3 3-4.2 6-4.2s6 1.2 6 4.2z" fill="#0b57d0" /></svg>
        <svg width="4" height="14" viewBox="0 0 4 14" className="ml-[24px]" fill="#d8d8d8"><circle cx="2" cy="1.8" r="1.5" /><circle cx="2" cy="7" r="1.5" /><circle cx="2" cy="12.2" r="1.5" /></svg>
      </div>
    </header>
  );
}

export default function App() {
  return (
    <div className="h-[1014px] w-[1920px] overflow-hidden bg-white [font-family:Inter,sans-serif]">
      <Chrome />
      <div className="flex h-[927px]">
        <main className="ml-[501px] w-[904px]">
          <Tracks />
          <WorldMap />
        </main>
        <div className="ml-auto flex w-[15px] flex-col items-center bg-[#f1f1f1]">
          <svg width="7" height="4" viewBox="0 0 7 4" className="mt-[6px]" fill="#505050"><path d="M3.5 0 7 4H0z" /></svg>
          <div className="mt-[333px] h-[461px] w-[11px] bg-[#c1c1c1]" />
          <svg width="7" height="4" viewBox="0 0 7 4" className="mb-[6px] mt-auto" fill="#505050"><path d="M0 0H7L3.5 4z" /></svg>
        </div>
      </div>
    </div>
  );
}
